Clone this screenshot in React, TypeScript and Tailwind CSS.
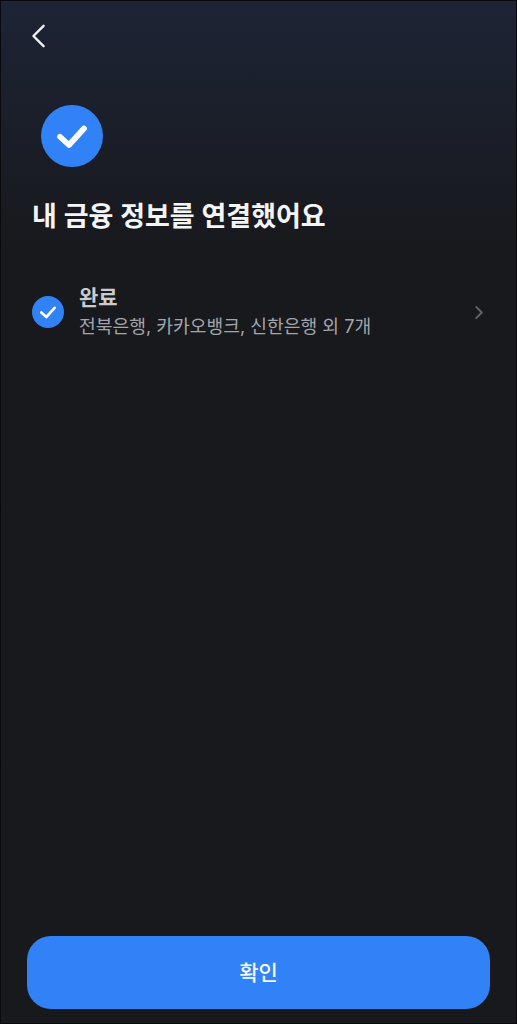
const fontStack = { fontFamily: '"Inter", "Noto Sans CJK KR", sans-serif' };

function CheckMark({ className, strokeWidth }: { className: string; strokeWidth: number }) {
    return (
        <svg viewBox="0 0 24 24" fill="none" className={className}>
            <path d="M4 12.5L10 18L20 7" stroke="white" strokeWidth={strokeWidth} strokeLinecap="round" strokeLinejoin="round" />
        </svg>
    );
}

export default function App() {
    return (
        <div
            style={fontStack}
            className="flex h-[1024px] w-[517px] flex-col overflow-hidden border border-[#0a0a0c] bg-[#18191e] bg-gradient-to-b from-[#1d2436] to-[#18191d] to-[24%]"
        >
            {/* Header */}
            <div className="flex h-[70px] shrink-0 items-center pl-[30px]">
                <svg viewBox="0 0 16 26" fill="none" className="h-[24px] w-[15px]">
                    <path d="M13.5 2L2.5 13L13.5 24" stroke="#f0f1f3" strokeWidth="2.6" strokeLinecap="round" strokeLinejoin="round" />
                </svg>
            </div>

            <div className="flex flex-1 flex-col px-[31px]">
                <div className="ml-[9px] mt-[34px] flex h-[62px] w-[62px] items-center justify-center rounded-full bg-[#3182f6]">
                    <CheckMark className="h-[36px] w-[36px]" strokeWidth={3.8} />
                </div>
                <h1 className="mt-[31px] text-[27px] font-semibold leading-[38px] text-[#f4f5f7]">내 금융 정보를 연결했어요</h1>

                {/* Result row */}
                <div className="mt-[48px] flex items-center">
                    <div className="flex h-[32px] w-[32px] shrink-0 items-center justify-center rounded-full bg-[#3182f6]">
                        <CheckMark className="h-[20px] w-[20px]" strokeWidth={3.2} />
                    </div>
                    <div className="ml-[15px] flex-1">
                        <div className="text-[21px] font-semibold leading-[28px] text-[#c9cbd0]">완료</div>
                        <div className="text-[18.2px] leading-[28px] text-[#a3a5ac]">전북은행, 카카오뱅크, 신한은행 외 7개</div>
                    </div>
                    <svg viewBox="0 0 10 16" fill="none" className="mr-[1px] h-[15px] w-[10px]">
                        <path d="M2 2L8 8L2 14" stroke="#62646b" strokeWidth="2" strokeLinecap="round" strokeLinejoin="round" />
                    </svg>
                </div>
            </div>

            {/* Confirm button */}
            <div className="px-[26px] pb-[14px]">
                <button className="flex h-[73px] w-full items-center justify-center rounded-[24px] bg-[#3182f6] text-[21px] font-medium text-[#f4f7fd]">
                    확인
                </button>
            </div>
        </div>
    );
}
